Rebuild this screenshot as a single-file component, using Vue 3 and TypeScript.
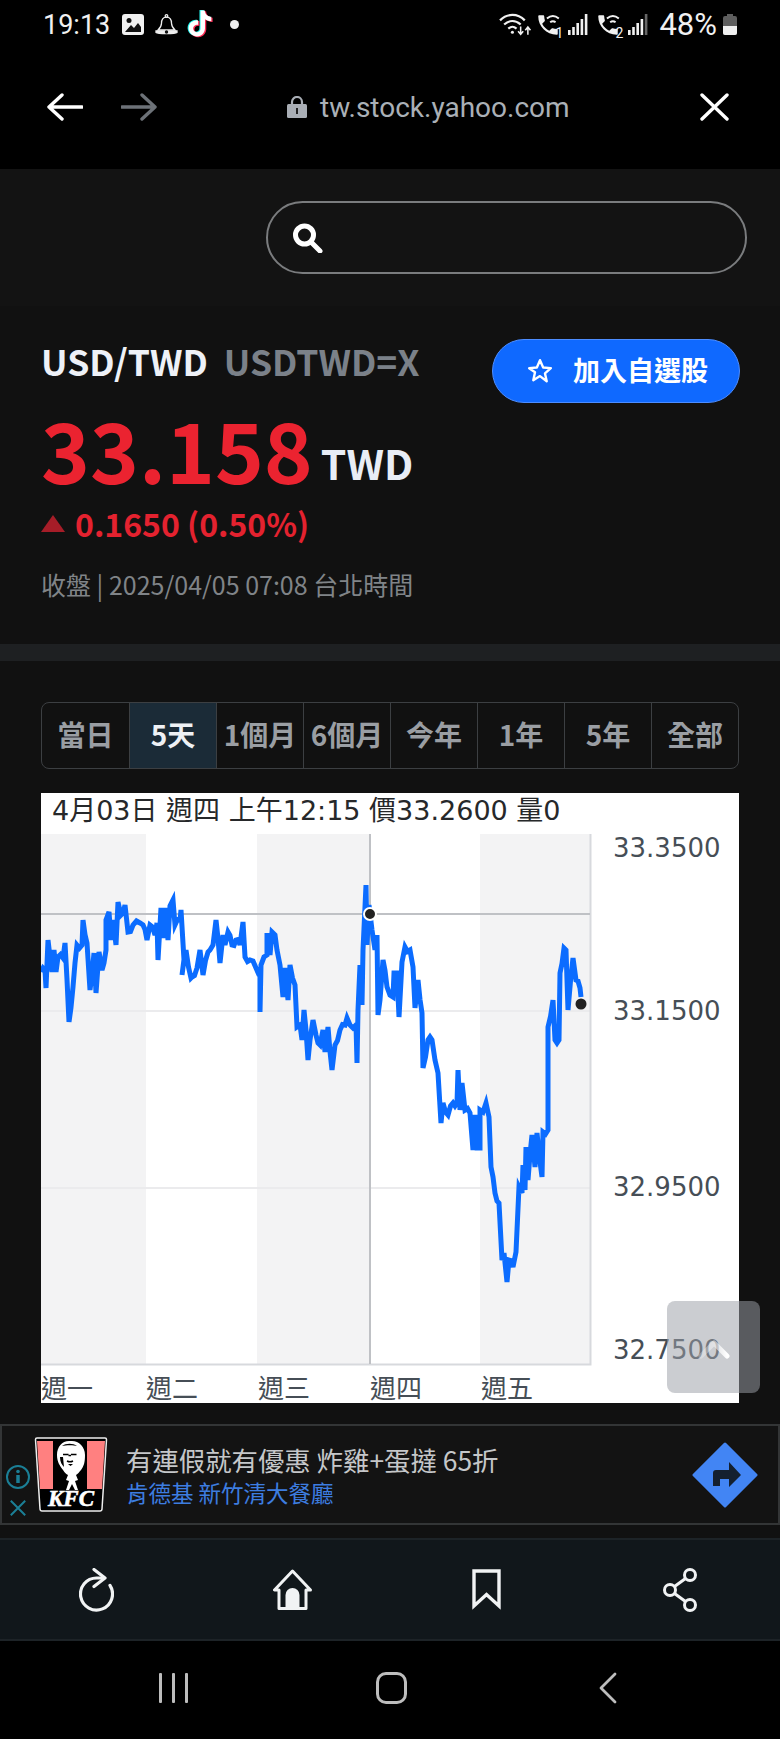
<template>
  <div class="page">
    <header class="top">
      <div class="status">
        <span class="time">19:13</span>
        <svg class="ic-img" viewBox="0 0 22 21">
          <rect width="22" height="21" rx="3" fill="#f1f1f1" />
          <circle cx="7" cy="6.500" r="2.500" fill="#111" />
          <path d="M3 18l6-7 3 3 4-5 3 4v5z" fill="#111" />
        </svg>
        <svg class="ic-bell" viewBox="0 0 23 21" fill="none" stroke="#eee" stroke-width="1.300">
          <circle cx="11.500" cy="2" r="1.300" />
          <path d="M11.500 3.200c-3.600 0-5 2.600-5 6 0 3-1.600 5-3.500 6.800h17c-1.900-1.800-3.500-3.800-3.500-6.800 0-3.400-1.400-6-5-6z" />
          <path d="M1 17h21v1.400c-2 1.600-19 1.600-21 0z" fill="#eee" />
          <circle cx="11.500" cy="18" r="1.700" fill="#111" stroke="none" />
        </svg>
        <svg class="ic-tiktok" viewBox="0 0 24 26">
          <path :d="tiktok" fill="#25f4ee" transform="translate(-1 -.4)" />
          <path :d="tiktok" fill="#fe2c55" transform="translate(1.200 .8)" />
          <path :d="tiktok" fill="#fff" />
        </svg>
        <span class="dot"></span>
        <span class="grow"></span>
        <svg class="ic-wifi" viewBox="0 0 32 22" fill="none" stroke="#f1f1f1" stroke-width="2.200">
          <path d="M1 7c7-7 17-7 24 0M5 11c5-4.500 11-4.500 16 0M9 15c3-2.500 5-2.500 8 0" />
          <circle cx="13" cy="18.500" r="1.500" fill="#f1f1f1" stroke="none" />
          <path d="M21 13v7M18.500 17.500l2.500 3 2.500-3M28 21v-7M25.500 16.500l2.500-3 2.500 3" stroke-width="1.500" />
        </svg>
        <span class="sim first">
          <svg viewBox="0 0 24 24"><path :d="phone" fill="#f1f1f1" /><path d="M11 6c3.500-3 7.500-3 11 0M14 9.500c2-1.500 3-1.500 5 0" fill="none" stroke="#f1f1f1" stroke-width="1.800" /></svg>
          <b>1</b>
        </span>
        <svg class="ic-signal" viewBox="0 0 20 21"><rect v-for="(h, i) in bars" :key="i" :x="i * 4.200" :y="21 - h" width="2.600" :height="h" fill="#f1f1f1" /></svg>
        <span class="sim">
          <svg viewBox="0 0 24 24"><path :d="phone" fill="#f1f1f1" /><path d="M11 6c3.500-3 7.500-3 11 0M14 9.500c2-1.500 3-1.500 5 0" fill="none" stroke="#f1f1f1" stroke-width="1.800" /></svg>
          <b>2</b>
        </span>
        <svg class="ic-signal" viewBox="0 0 20 21"><rect v-for="(h, i) in bars" :key="i" :x="i * 4.200" :y="21 - h" width="2.600" :height="h" :fill="i === 4 ? '#666' : '#f1f1f1'" /></svg>
        <span class="batt-text">48%</span>
        <svg class="ic-batt" viewBox="0 0 14 21">
          <path d="M4 0h6v2h2a2 2 0 0 1 2 2v15a2 2 0 0 1-2 2H2a2 2 0 0 1-2-2V4a2 2 0 0 1 2-2h2z" fill="#5e5e5e" />
          <path d="M0 12h14v7a2 2 0 0 1-2 2H2a2 2 0 0 1-2-2z" fill="#f0f0f0" />
        </svg>
      </div>
      <div class="browser">
        <svg class="ic-arrow" viewBox="0 0 36 28" fill="none" stroke="#fff" stroke-width="3.400" stroke-linecap="round" stroke-linejoin="round">
          <path d="M35 14H2M15 2L2 14l13 12" />
        </svg>
        <svg class="ic-arrow fwd" viewBox="0 0 36 28" fill="none" stroke="#6d7278" stroke-width="3.400" stroke-linecap="round" stroke-linejoin="round">
          <path d="M1 14h33M21 2l13 12-13 12" />
        </svg>
        <div class="url">
          <svg class="ic-lock" viewBox="0 0 20 22">
            <path d="M5 9V6a5 5 0 0 1 10 0v3" fill="none" stroke="#a9aeb5" stroke-width="2.200" />
            <rect y="8" width="20" height="14" rx="1.500" fill="#a9aeb5" />
            <rect x="9" y="12" width="2" height="6" fill="#222" />
          </svg>
          <span>tw.stock.yahoo.com</span>
        </div>
        <svg class="ic-close" viewBox="0 0 29 28" fill="none" stroke="#fff" stroke-width="3.400" stroke-linecap="round">
          <path d="M2 2l25 24M27 2L2 26" />
        </svg>
      </div>
    </header>

    <section class="search-row">
      <div class="search">
        <svg viewBox="0 0 31 30" fill="none" stroke="#fff">
          <circle cx="12.500" cy="12" r="9" stroke-width="5" />
          <path d="M19 19l9 9" stroke-width="5" stroke-linecap="round" />
        </svg>
      </div>
    </section>

    <section class="quote">
      <div class="quote-head">
        <div class="names">
          <h1>USD/TWD</h1>
          <span class="symbol">USDTWD=X</span>
        </div>
        <button class="follow">
          <svg viewBox="0 0 24 24" fill="none" stroke="#fff" stroke-width="2.200" stroke-linejoin="round">
            <path d="M12 2l2.900 6.800 7.100.6-5.400 4.800 1.600 7.300L12 16.700l-6.200 3.800 1.600-7.300L2 9.400l7.100-.6z" />
          </svg>
          <span>加入自選股</span>
        </button>
      </div>
      <div class="price"><strong>33.158</strong><span>TWD</span></div>
      <div class="change"><i class="tri"></i><span>0.1650 (0.50%)</span></div>
      <div class="closed">收盤 | 2025/04/05 07:08 台北時間</div>
    </section>
    <div class="band"></div>

    <main class="main">
      <div class="tabs">
        <div v-for="t in ranges" :key="t" class="tab" :class="{ active: t === '5天' }">{{ t }}</div>
      </div>
      <div class="chart">
        <div class="chart-info">4月03日 週四 上午12:15 價33.2600 量0</div>
        <svg class="plot" viewBox="41 834 698 569">
          <rect x="41" y="834" width="105" height="530" fill="#f3f3f4" />
          <rect x="257" y="834" width="113" height="530" fill="#f3f3f4" />
          <rect x="480" y="834" width="111" height="530" fill="#f3f3f4" />
          <path d="M41 1011H590M41 1188H590" stroke="#ebebed" stroke-width="2" />
          <path d="M590.500 834V1364.500H41" fill="none" stroke="#d7d9dd" stroke-width="2" />
          <path d="M41 914H590M370 834V1364" stroke="#bfc1c5" stroke-width="2" />
          <polyline :points="line" fill="none" stroke="#0b6cff" stroke-width="5" stroke-linejoin="miter" stroke-miterlimit="4" />
          <circle cx="370" cy="914" r="6" fill="#222" stroke="#fff" stroke-width="2" />
          <circle cx="581" cy="1004" r="5.500" fill="#222" />
          <text v-for="l in yLabels" :key="l.text" x="613" :y="l.y" class="axis">{{ l.text }}</text>
          <text v-for="l in xLabels" :key="l.text" :x="l.x" y="1398" class="axis">{{ l.text }}</text>
        </svg>
      </div>
    </main>

    <aside class="ad">
      <div class="ad-side">
        <svg viewBox="0 0 26 26" fill="none" stroke="#1b7f96" stroke-width="2">
          <circle cx="13" cy="13" r="11" />
          <path d="M13 11v8" stroke-width="3.500" />
          <circle cx="13" cy="7.500" r="1.800" fill="#1b7f96" stroke="none" />
        </svg>
        <svg viewBox="0 0 20 20" fill="none" stroke="#1b7f96" stroke-width="2.200">
          <path d="M2 2l16 16M18 2L2 18" />
        </svg>
      </div>
      <svg class="kfc" viewBox="0 0 74 75">
        <path d="M1.500 2.500Q1.500 1 3 1H71q1.500 0 1.500 1.500L68 72q-.2 2-2 2H8q-1.800 0-2-2z" fill="#000" stroke="#eee" stroke-width="1.500" />
        <path d="M3 4h16l0 48H6zM53 4h18l-3 48H53z" fill="#ff8080" />
        <path d="M35 4c-7 0-12 6-12 14 0 7 3 11 6 15 2 3 3 4 5 5l-2 5 3 1-3 9h3l3-6 3 6h3l-3-9 3-1-2-5c2-1 3-3 5-5 3-4 4-8 4-15 0-8-6-14-13-14z" fill="#fff" />
        <path d="M28 9c4-3 11-3 15 0-3-1-11-1-15 0zM26 20c0 5 2 8 4 10l-1-10zM34 27h5l-2.500 2z" fill="#000" />
        <path d="M29 17.500h5.500M37 17.500h5.500M34.500 18.500h2.500M33 24c2 1 4 1 6 0" fill="none" stroke="#000" stroke-width="1.500" />
        <text x="37" y="69" class="kfc-text" text-anchor="middle">KFC</text>
      </svg>
      <div class="ad-copy">
        <div class="ad-title">有連假就有優惠 炸雞+蛋撻 65折</div>
        <div class="ad-sub">肯德基 新竹清大餐廳</div>
      </div>
      <svg class="ad-go" viewBox="0 0 66 66">
        <path d="M33 2L64 33 33 64 2 33z" fill="#4285f4" stroke="#4285f4" stroke-width="3" stroke-linejoin="round" />
        <path d="M21 44V31q0-3 3-3h13v-8l12 13-12 12v-8H28v7z" fill="#14202f" />
      </svg>
    </aside>

    <nav class="tools">
      <svg class="t-reload" viewBox="0 0 35 44" fill="none" stroke="#f1f3f4" stroke-width="3.200" stroke-linecap="round" stroke-linejoin="round">
        <path d="M15 1.500L26 10 15 18.500" />
        <path d="M24 10h-6.500a16 16 0 1 0 13.500 7.400" />
      </svg>
      <svg class="t-home" viewBox="0 0 39 41" fill="none" stroke="#f1f3f4" stroke-width="3">
        <path d="M19.500 2L1.500 21H6V39.500H33V21h4.500z" stroke-linejoin="round" />
        <path d="M12.500 38v-12a7 7 0 0 1 14 0v12z" fill="#f1f3f4" stroke="none" />
      </svg>
      <svg class="t-mark" viewBox="0 0 29 41" fill="none" stroke="#f1f3f4" stroke-width="3.400">
        <path d="M2 2H27V37L14.500 25.500 2 37z" />
      </svg>
      <svg class="t-share" viewBox="0 0 35 44" fill="none" stroke="#f1f3f4" stroke-width="3">
        <circle cx="27" cy="7" r="5.500" />
        <circle cx="7" cy="22" r="5.500" />
        <circle cx="27" cy="37" r="5.500" />
        <path d="M22.500 10.500L11.500 18.500M11.500 25.500l11 8" />
      </svg>
    </nav>

    <footer class="softkeys">
      <div class="k-recent"><i></i><i></i><i></i></div>
      <div class="k-home"></div>
      <svg class="k-back" viewBox="0 0 18 32" fill="none" stroke="#bdbdbd" stroke-width="2.800" stroke-linecap="round" stroke-linejoin="round">
        <path d="M16 2L2 16l14 14" />
      </svg>
    </footer>

    <div class="to-top">
      <svg viewBox="0 0 34 20" fill="none" stroke="url(#top-fade)" stroke-width="5" stroke-linecap="round" stroke-linejoin="round">
        <defs>
          <linearGradient id="top-fade" gradientUnits="userSpaceOnUse" x1="4" y1="0" x2="30" y2="0">
            <stop offset="0" stop-color="#fff" stop-opacity="0.25" />
            <stop offset="0.55" stop-color="#fff" stop-opacity="0.45" />
            <stop offset="1" stop-color="#fff" />
          </linearGradient>
        </defs>
        <path d="M4 17L17 4l13 13" />
      </svg>
    </div>
  </div>
</template>

<script setup lang="ts">
const ranges = ['當日', '5天', '1個月', '6個月', '今年', '1年', '5年', '全部']
const bars = [5, 8, 12, 16, 21]

const tiktok =
  'M12.525.02c1.31-.02 2.61-.01 3.91-.02.08 1.53.63 3.09 1.75 4.17 1.12 1.11 2.7 1.62 4.24 1.79v4.03c-1.44-.05-2.89-.35-4.2-.97-.57-.26-1.1-.59-1.62-.93-.01 2.92.01 5.84-.02 8.75-.08 1.4-.54 2.79-1.35 3.94-1.31 1.92-3.58 3.17-5.91 3.21-1.43.08-2.86-.31-4.08-1.03-2.02-1.19-3.44-3.37-3.65-5.71-.02-.5-.03-1-.01-1.49.18-1.9 1.12-3.72 2.58-4.96 1.66-1.44 3.98-2.13 6.15-1.72.02 1.48-.04 2.96-.04 4.44-.99-.32-2.15-.23-3.02.37-.63.41-1.11 1.04-1.36 1.75-.21.51-.15 1.07-.14 1.61.24 1.64 1.82 3.02 3.5 2.87 1.12-.01 2.19-.66 2.77-1.61.19-.33.4-.67.41-1.06.1-1.79.06-3.57.07-5.36.01-4.03-.01-8.05.02-12.07z'
const phone =
  'M6.600 10.800c1.400 2.800 3.800 5.100 6.600 6.600l2.200-2.200c.3-.3.7-.4 1-.2 1.100.4 2.300.6 3.600.6.600 0 1 .4 1 1V20c0 .6-.4 1-1 1C10.600 21 3 13.400 3 4c0-.6.4-1 1-1h3.500c.6 0 1 .4 1 1 0 1.200.2 2.400.6 3.600.1.3 0 .7-.2 1l-2.300 2.200z'

const yLabels = [
  { text: '33.3500', y: 857 },
  { text: '33.1500', y: 1020 },
  { text: '32.9500', y: 1196 },
  { text: '32.7500', y: 1359 },
]
const xLabels = [
  { text: '週一', x: 41 },
  { text: '週二', x: 146 },
  { text: '週三', x: 258 },
  { text: '週四', x: 370 },
  { text: '週五', x: 481 },
]

// traced from the 5 day quote, x/y in page pixels
const traced = [
  '41,972 45,970 46,988 48,940 50,957 52,972 54,950 56,972 58,957 63,958 65,943 69,1022 73,987 77,945 82,945 83,920',
  '87,943 90,990 94,953 96,993 99,952 102,970 106,950 106,920 109,912 111,940 113,920 116,945 118,902 121,915 125,905',
  '128,932 133,925 140,923 143,925 147,940 150,925 155,935 157,923 158,960 161,908 163,938 166,908 168,940 170,906',
  '173,900 175,925 180,920 181,910 184,960 182,975 186,950 191,978 192,977 197,968 200,950 203,975 208,952 210,950',
  '213,945 216,920 220,963 223,935 225,945 228,932 232,945 236,940 240,945 243,922 245,957 250,960 256,968 260,971',
  '260,1012 261,965 267,955 267,933 270,955 272,932 275,935 277,950 280,965 283,997 285,968 288,1000 290,965 295,985',
  '297,1027 300,1025 302,1040 304,1010 306,1030 308,1060 310,1040 313,1020 316,1035 320,1045 323,1030 325,1052',
  '328,1027 332,1070 335,1045 340,1030 345,1025 347,1018 350,1025 356,1025 357,1063 358,1010 360,965 362,1005 363,950',
  '366,885 367,945 369,905 372,930 375,950 377,935 378,1015 380,1000 383,960 387,987 393,997 394,973 397,973 399,1017',
  '402,962 405,947 410,950 413,967 415,1008 418,980 422,1013 423,1068 428,1040 432,1040 435,1060 438,1073 441,1123',
  '443,1103 448,1115 453,1103 457,1103 458,1070 460,1110 462,1083 465,1110 470,1113 473,1150 475,1115 477,1148',
  '480,1148 480,1110 483,1112 486,1103 489,1117 491,1167 495,1193 499,1203 502,1260 504,1253 507,1282 509,1260',
  '513,1267 516,1252 519,1187 522,1193 523,1165 525,1190 526,1147 528,1180 532,1135 535,1167 537,1133 542,1177',
  '543,1132 548,1130 548,1027 553,1000 555,1040 559,1040 560,973 564,948 566,950 568,1010 573,958 576,980 580,988 581,997',
]
  .join(' ')
  .split(' ')
  .map((p) => p.split(',').map(Number))

// the real series ticks every few minutes, so roughen the longer segments a bit
const line = traced
  .flatMap(([x, y], i) => {
    const next = traced[i + 1]
    if (!next || next[0] - x < 4) return [`${x},${y}`]
    const mid = `${(x + next[0]) / 2},${(y + next[1]) / 2 + (i % 2 ? 3 : -3)}`
    return [`${x},${y}`, mid]
  })
  .join(' ')
</script>

<style>
html,
body {
  background: #111;
}
</style>

<style scoped>
.page {
  position: relative;
  width: 780px;
  height: 1739px;
  overflow: hidden;
  background: #111;
  font-family: "Noto Sans CJK TC", sans-serif;
}

.top {
  height: 169px;
  background: #000;
}

.status {
  height: 49px;
  display: flex;
  align-items: center;
  padding: 0 43px;
  color: #f1f1f1;
  font-family: Roboto, sans-serif;
}

.time {
  font-size: 27px;
  width: 79px;
  flex: none;
}

.ic-img {
  width: 22px;
  height: 21px;
  flex: none;
}

.ic-bell {
  width: 23px;
  height: 21px;
  margin-left: 11px;
  flex: none;
}

.ic-tiktok {
  width: 26px;
  height: 29px;
  margin-left: 9px;
  flex: none;
}

.dot {
  width: 9px;
  height: 9px;
  border-radius: 50%;
  background: #eee;
  margin-left: 17px;
  flex: none;
}

.grow {
  flex: 1;
}

.ic-wifi {
  width: 33px;
  height: 23px;
  flex: none;
}

.sim {
  position: relative;
  width: 26px;
  height: 26px;
  margin-left: 7px;
  flex: none;
}

.sim.first {
  margin-left: 3px;
}

.sim svg {
  width: 26px;
  height: 26px;
  display: block;
}

.sim b {
  position: absolute;
  right: -2px;
  bottom: -3px;
  font-size: 14px;
  font-weight: 400;
}

.ic-signal {
  width: 20px;
  height: 21px;
  margin-left: 7px;
  flex: none;
}

.batt-text {
  font-size: 31px;
  margin-left: 11px;
  flex: none;
}

.ic-batt {
  width: 14px;
  height: 21px;
  margin-left: 6px;
  flex: none;
}

.browser {
  height: 120px;
  display: flex;
  align-items: center;
  padding: 0 51px 0 47px;
  margin-top: -2px;
}

.ic-arrow {
  width: 36px;
  height: 28px;
  flex: none;
}

.ic-arrow.fwd {
  margin-left: 38px;
}

.url {
  flex: 1;
  display: flex;
  align-items: center;
  padding-left: 130px;
  gap: 13px;
  color: #aab0b7;
  font-family: Roboto, sans-serif;
  font-size: 28px;
}

.ic-lock {
  width: 20px;
  height: 22px;
}

.ic-close {
  width: 29px;
  height: 28px;
  flex: none;
}

.search-row {
  height: 137px;
  display: flex;
  justify-content: flex-end;
  padding: 32px 33px 0 0;
  box-sizing: border-box;
  background: #131313;
}

.search {
  width: 481px;
  height: 73px;
  box-sizing: border-box;
  border: 2px solid #7a7c7e;
  border-radius: 37px;
  display: flex;
  align-items: center;
  padding-left: 24px;
}

.search svg {
  width: 31px;
  height: 30px;
}

.quote {
  height: 338px;
  box-sizing: border-box;
  padding: 33px 41px 0;
}

.quote-head {
  display: flex;
  justify-content: space-between;
}

.names {
  display: flex;
  align-items: baseline;
  gap: 16px;
  height: 44px;
}

h1 {
  margin: 0;
  font-size: 35.500px;
  line-height: 44px;
  font-weight: 700;
  color: #eef1f7;
}

.symbol {
  font-size: 35.500px;
  line-height: 44px;
  font-weight: 700;
  color: #7b8189;
}

.follow {
  width: 248px;
  height: 64px;
  box-sizing: border-box;
  border: 1px solid #4d8dff;
  border-radius: 32px;
  background: #0f69ff;
  color: #fff;
  display: flex;
  align-items: center;
  padding: 0 0 4px 34px;
  gap: 20px;
  font-family: inherit;
  font-size: 27px;
  font-weight: 700;
  margin-right: -1px;
}

.follow svg {
  width: 26px;
  height: 26px;
  margin-top: 4px;
}

.price {
  display: flex;
  align-items: baseline;
  gap: 8px;
  margin-top: -3px;
  height: 96px;
  line-height: 96px;
}

.price strong {
  font-size: 83px;
  font-weight: 700;
  color: #eb2330;
}

.price span {
  position: relative;
  top: -4px;
  font-size: 41px;
  font-weight: 700;
  color: #e9edf5;
}

.change {
  display: flex;
  align-items: center;
  gap: 10px;
  font-size: 32px;
  font-weight: 700;
  color: #e4222f;
  height: 46px;
  margin-top: 4px;
}

.tri {
  width: 0;
  height: 0;
  border-left: 12.500px solid transparent;
  border-right: 12.500px solid transparent;
  border-bottom: 17px solid #a61d28;
}

.closed {
  margin-top: 21px;
  font-size: 25px;
  line-height: 34px;
  color: #808488;
}

.band {
  height: 17px;
  background: #1e2022;
}

.main {
  padding: 41px 41px 21px;
}

.tabs {
  display: grid;
  grid-template-columns: repeat(8, 1fr);
  height: 67px;
  box-sizing: border-box;
  border: 1.500px solid #3c3f42;
  border-radius: 8px;
  overflow: hidden;
}

.tab {
  display: flex;
  align-items: center;
  justify-content: center;
  padding-bottom: 4px;
  font-size: 28px;
  font-weight: 700;
  color: #9a9ea3;
  border-left: 1.500px solid #3c3f42;
  white-space: nowrap;
}

.tab:first-child {
  border-left: 0;
}

.tab.active {
  background: #1b2b37;
  color: #eef1f5;
}

.chart {
  margin-top: 24px;
  background: #fff;
  font-family: "DejaVu Sans", "Noto Sans CJK TC", sans-serif;
}

.chart-info {
  height: 41px;
  padding-left: 11px;
  font-size: 27px;
  line-height: 36px;
  color: #26282a;
}

.plot {
  display: block;
  width: 698px;
  height: 569px;
}

.axis {
  font-size: 26px;
  fill: #464e56;
}

.ad {
  height: 101px;
  box-sizing: border-box;
  border: 2px solid #333536;
  background: #131313;
  display: flex;
  align-items: center;
  position: relative;
}

.ad-side {
  width: 32px;
  flex: none;
  display: flex;
  flex-direction: column;
  align-items: center;
  align-self: flex-end;
  gap: 9px;
  padding: 0 0 6px 0;
}

.ad-side svg:first-child {
  width: 26px;
  height: 26px;
}

.ad-side svg:last-child {
  width: 18px;
  height: 18px;
}

.kfc {
  width: 74px;
  height: 75px;
  flex: none;
}

.kfc-text {
  font-family: "Liberation Serif", serif;
  font-style: italic;
  font-weight: 700;
  font-size: 23px;
  fill: #fff;
  stroke: #fff;
  stroke-width: 0.6px;
}

.ad-copy {
  margin-left: 18px;
  flex: 1;
}

.ad-title {
  font-size: 26.400px;
  line-height: 34px;
  color: #c5c7c9;
}

.ad-sub {
  font-size: 22.500px;
  line-height: 30px;
  color: #3d7de0;
}

.ad-go {
  width: 66px;
  height: 66px;
  margin-right: 20px;
  flex: none;
}

.tools {
  margin-top: 13px;
  height: 103px;
  box-sizing: border-box;
  border-top: 2px solid #1d2327;
  border-bottom: 2px solid #1d2327;
  background: #11171b;
  position: relative;
  display: grid;
  grid-template-columns: 193px 199px 189px 199px;
  align-items: center;
  justify-items: center;
}

.t-reload {
  width: 35px;
  height: 44px;
}

.t-home {
  width: 39px;
  height: 41px;
}

.t-mark {
  width: 29px;
  height: 41px;
}

.t-share {
  width: 35px;
  height: 44px;
}

.softkeys {
  height: 98px;
  background: #000;
  display: grid;
  grid-template-columns: 347px 89px 344px;
  align-items: center;
  justify-items: center;
  padding-bottom: 4px;
  box-sizing: border-box;
}

.k-recent {
  display: flex;
  gap: 10px;
}

.k-recent i {
  width: 3px;
  height: 30px;
  border-radius: 1px;
  background: #bdbdbd;
}

.k-home {
  width: 31px;
  height: 32px;
  box-sizing: border-box;
  border: 3px solid #bdbdbd;
  border-radius: 10px;
}

.k-back {
  width: 18px;
  height: 32px;
}

.to-top {
  position: absolute;
  left: 667px;
  top: 1301px;
  width: 93px;
  height: 92px;
  border-radius: 8px;
  background: rgba(156, 160, 166, 0.52);
}

.to-top svg {
  position: absolute;
  left: 30px;
  top: 38px;
  width: 34px;
  height: 20px;
}
</style>
